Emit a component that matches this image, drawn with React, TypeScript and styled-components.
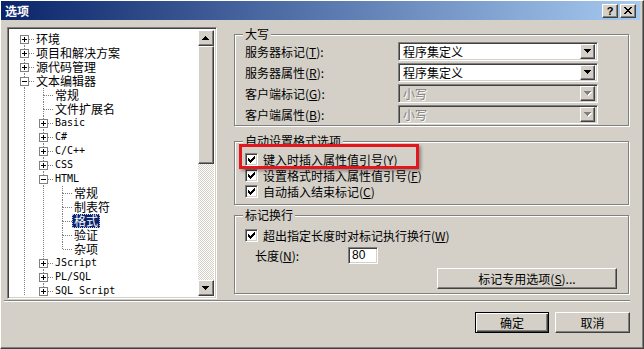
import styled, { createGlobalStyle, css } from "styled-components";

const GlobalStyle = createGlobalStyle`
  html, body { margin: 0; padding: 0; background: #d4d0c8; }
  body {
    font-family: "Noto Sans CJK SC", "Liberation Sans", sans-serif;
    font-size: 12px;
    line-height: 14px;
    color: #000;
  }
  * { box-sizing: border-box; }
`;

const raised = css`
  border: 1px solid;
  border-color: #fff #404040 #404040 #fff;
  box-shadow: inset -1px -1px 0 #808080, inset 1px 1px 0 #d4d0c8;
  background: #d4d0c8;
`;

const sunken = css`
  border: 1px solid;
  border-color: #808080 #fff #fff #808080;
  box-shadow: inset 1px 1px 0 #404040, inset -1px -1px 0 #d4d0c8;
`;

const Window = styled.div`
  position: relative;
  width: 644px;
  height: 349px;
  background: #d4d0c8;
  border-left: 1px solid #fff;
  border-top: 1px solid #fff;
  border-right: 1px solid #404040;
  border-bottom: 1px solid #404040;
  box-shadow: inset -1px -1px 0 #808080;
  padding: 0 3px 2px 0;
  display: flex;
  flex-direction: column;
`;

const TitleBar = styled.div`
  height: 19px;
  display: flex;
  align-items: center;
  padding: 0 4px 0 4px;
  background: linear-gradient(to right, #0a246a, #a6caf0);
  color: #fff;
  font-weight: bold;
`;

const Title = styled.div`
  flex: 1;
`;

const CaptionButton = styled.div`
  ${raised};
  width: 16px;
  height: 14px;
  margin-left: 2px;
  display: flex;
  align-items: center;
  justify-content: center;
  color: #000;
  font-family: "Liberation Sans", sans-serif;
  font-size: 11px;
  font-weight: bold;
  line-height: 12px;
`;

const Body = styled.div`
  height: 280px;
  display: flex;
  padding: 7px 0 0 6px;
`;

const TreeBox = styled.div`
  ${sunken};
  background: #fff;
  width: 210px;
  height: 272px;
  padding: 2px;
  display: flex;
`;

const TreeList = styled.div`
  flex: 1;
  overflow: hidden;
  padding: 2px 0 0 5px;
`;

const TreeRow = styled.div`
  height: 14px;
  display: flex;
  align-items: center;
  white-space: nowrap;
`;

const TreeLabel = styled.span<{ $selected?: boolean; $mono?: boolean }>`
  padding: 0 2px;
  height: 14px;
  line-height: 14px;
  ${(p) =>
    p.$mono &&
    css`
      font-family: "DejaVu Sans Mono", "Liberation Mono", monospace;
      font-size: 10px;
    `}
  ${(p) =>
    p.$selected &&
    css`
      background: #0a246a;
      color: #fff;
      outline: 1px dotted #c8c8ff;
      outline-offset: -1px;
    `}
`;

const ScrollBar = styled.div`
  width: 16px;
  display: flex;
  flex-direction: column;
`;

const ScrollButton = styled.div`
  ${raised};
  width: 16px;
  height: 16px;
  display: flex;
  align-items: center;
  justify-content: center;
`;

const Thumb = styled.div`
  ${raised};
  height: 118px;
`;

const Track = styled.div`
  flex: 1;
  background: repeating-conic-gradient(#fff 0 25%, #d4d0c8 0 50%) 0 0 / 2px 2px;
`;

const RightPane = styled.div`
  width: 395px;
  margin-left: 17px;
  display: flex;
  flex-direction: column;
`;

const Group = styled.fieldset<{ $h: number; $mt: number }>`
  margin: ${(p) => p.$mt}px 0 0 0;
  padding: 0;
  height: ${(p) => p.$h}px;
  min-inline-size: 0;
  border: 1px solid #808080;
  box-shadow: inset 1px 1px 0 #fff, 1px 1px 0 #fff;
`;

const Legend = styled.legend`
  margin-left: 8px;
  padding: 0 2px;
  line-height: 14px;
  background: #d4d0c8;
  position: relative;
`;

const GroupBody = styled.div<{ $pt: number }>`
  padding: ${(p) => p.$pt}px 0 0 10px;
  display: flex;
  flex-direction: column;
`;

const FieldRow = styled.div`
  height: 19px;
  margin-bottom: 2px;
  display: flex;
  align-items: center;
`;

const FieldLabel = styled.div<{ $w: number; $pl?: number }>`
  width: ${(p) => p.$w}px;
  padding-left: ${(p) => p.$pl ?? 0}px;
  color: #000;
`;

const Combo = styled.div<{ $disabled?: boolean }>`
  ${sunken};
  width: 200px;
  height: 19px;
  padding: 2px;
  display: flex;
  align-items: center;
  background: ${(p) => (p.$disabled ? "#d4d0c8" : "#fff")};
  color: ${(p) => (p.$disabled ? "#808080" : "#000")};
  text-shadow: ${(p) => (p.$disabled ? "1px 1px 0 #fff" : "none")};
`;

const ComboText = styled.div`
  flex: 1;
  padding-left: 2px;
`;

const DropButton = styled.div`
  ${raised};
  width: 15px;
  height: 15px;
  display: flex;
  align-items: center;
  justify-content: center;
`;

const CheckRow = styled.div`
  height: 16px;
  display: flex;
  align-items: flex-start;
`;

const CheckBox = styled.div`
  ${sunken};
  background: #fff;
  width: 13px;
  height: 13px;
  margin-top: 1px;
  display: flex;
  align-items: center;
  justify-content: center;
`;

const CheckLabel = styled.span`
  margin-left: 5px;
  line-height: 15px;
`;

const LengthRow = styled.div`
  margin-top: 3px;
  height: 17px;
  display: flex;
  align-items: center;
`;

const TextInput = styled.div`
  ${sunken};
  background: #fff;
  width: 30px;
  height: 17px;
  padding: 1px 3px;
  font-family: "Liberation Sans", sans-serif;
  font-size: 12px;
  line-height: 13px;
`;

const ButtonRow = styled.div`
  margin-top: 4px;
  display: flex;
  justify-content: flex-end;
  padding-right: 11px;
`;

const PushButton = styled.div<{ $w: number; $default?: boolean }>`
  ${raised};
  width: ${(p) => p.$w}px;
  height: 21px;
  display: flex;
  align-items: center;
  justify-content: center;
  ${(p) =>
    p.$default &&
    css`
      border: 1px solid #000;
      box-shadow: inset 1px 1px 0 #fff, inset -1px -1px 0 #404040, inset -2px -2px 0 #808080;
    `}
`;

const Separator = styled.div`
  height: 2px;
  margin: 0 10px 0 3px;
  border-top: 1px solid #808080;
  border-bottom: 1px solid #fff;
`;

const Footer = styled.div`
  display: flex;
  justify-content: flex-end;
  gap: 6px;
  padding: 10px 10px 0 0;
`;

const Highlight = styled.div`
  position: absolute;
  left: 238px;
  top: 143px;
  width: 180px;
  height: 25px;
  border: 3px solid #e3161d;
  box-shadow: 2px 2px 3px rgba(0, 0, 0, 0.35);
  pointer-events: none;
`;

function Arrow({ up, disabled }: { up?: boolean; disabled?: boolean }) {
  const d = up
    ? "M3 0h1v1h1v1h1v1h1v1h-7v-1h1v-1h1v-1h1z"
    : "M0 0h7v1h-1v1h-1v1h-1v1h-1v-1h-1v-1h-1v-1h-1z";
  return (
    <svg width="8" height="5" viewBox="0 0 8 5" shapeRendering="crispEdges">
      {disabled && <path d={d} fill="#fff" transform="translate(1 1)" />}
      <path d={d} fill={disabled ? "#808080" : "#000"} />
    </svg>
  );
}

function Check() {
  const cols = [2, 3, 4, 3, 2, 1, 0];
  return (
    <svg width="7" height="7" viewBox="0 0 7 7" shapeRendering="crispEdges">
      <path d={cols.map((y, x) => `M${x} ${y}h1v3h-1z`).join("")} fill="#000" />
    </svg>
  );
}

function CloseGlyph() {
  return (
    <svg width="8" height="7" viewBox="0 0 8 7" shapeRendering="crispEdges">
      <path
        d="M0 0h2v1h1v1h2v-1h1v-1h2v1h-1v1h-1v1h-1v1h1v1h1v1h1v1h-2v-1h-1v-1h-2v1h-1v1h-2v-1h1v-1h1v-1h1v-1h-1v-1h-1v-1h-1z"
        fill="#000"
      />
    </svg>
  );
}

type Node = {
  label: string;
  level: number;
  exp?: "+" | "-";
  last?: boolean;
  selected?: boolean;
};

const tree: Node[] = [
  { label: "环境", level: 0, exp: "+" },
  { label: "项目和解决方案", level: 0, exp: "+" },
  { label: "源代码管理", level: 0, exp: "+" },
  { label: "文本编辑器", level: 0, exp: "-" },
  { label: "常规", level: 1 },
  { label: "文件扩展名", level: 1 },
  { label: "Basic", level: 1, exp: "+" },
  { label: "C#", level: 1, exp: "+" },
  { label: "C/C++", level: 1, exp: "+" },
  { label: "CSS", level: 1, exp: "+" },
  { label: "HTML", level: 1, exp: "-" },
  { label: "常规", level: 2 },
  { label: "制表符", level: 2 },
  { label: "格式", level: 2, selected: true },
  { label: "验证", level: 2 },
  { label: "杂项", level: 2, last: true },
  { label: "JScript", level: 1, exp: "+" },
  { label: "PL/SQL", level: 1, exp: "+" },
  { label: "SQL Script", level: 1, exp: "+" },
  { label: "T-SQL", level: 1, exp: "+" },
];

// one 19x14 cell of the tree connector lines
function TreeCell({ kind, top, bottom, exp }: { kind: "line" | "elbow"; top?: boolean; bottom?: boolean; exp?: "+" | "-" }) {
  const dash = { stroke: "#808080", strokeDasharray: "1 1", strokeWidth: 1 };
  return (
    <svg width="19" height="14" viewBox="0 0 19 14" shapeRendering="crispEdges" style={{ flex: "none" }}>
      {kind === "line" && <line x1="9.5" y1="0" x2="9.5" y2="14" {...dash} />}
      {kind === "elbow" && (
        <>
          {top && <line x1="9.5" y1="0" x2="9.5" y2="7" {...dash} />}
          {bottom && <line x1="9.5" y1="7" x2="9.5" y2="14" {...dash} />}
          <line x1="10" y1="7.5" x2="19" y2="7.5" {...dash} />
          {exp && (
            <>
              <rect x="5.5" y="3.5" width="8" height="8" fill="#fff" stroke="#808080" />
              <line x1="7" y1="7.5" x2="12" y2="7.5" stroke="#000" />
              {exp === "+" && <line x1="9.5" y1="5" x2="9.5" y2="10" stroke="#000" />}
            </>
          )}
        </>
      )}
    </svg>
  );
}

const combos = [
  { label: "服务器标记", key: "T", value: "程序集定义" },
  { label: "服务器属性", key: "R", value: "程序集定义" },
  { label: "客户端标记", key: "G", value: "小写", disabled: true },
  { label: "客户端属性", key: "B", value: "小写", disabled: true },
];

const checks = [
  { label: "键入时插入属性值引号", key: "Y" },
  { label: "设置格式时插入属性值引号", key: "F" },
  { label: "自动插入结束标记", key: "C" },
];

export default function App() {
  return (
    <>
      <GlobalStyle />
      <Window>
        <TitleBar>
          <Title>选项</Title>
          <CaptionButton>?</CaptionButton>
          <CaptionButton>
            <CloseGlyph />
          </CaptionButton>
        </TitleBar>
        <Body>
          <TreeBox>
            <TreeList>
              {tree.map((n, i) => (
                <TreeRow key={i}>
                  {Array.from({ length: n.level }).map((_, k) => (
                    <TreeCell key={k} kind="line" />
                  ))}
                  <TreeCell kind="elbow" top={i > 0} bottom={!n.last} exp={n.exp} />
                  <TreeLabel $selected={n.selected} $mono={/^[\x20-\x7e]+$/.test(n.label)}>
                    {n.label}
                  </TreeLabel>
                </TreeRow>
              ))}
            </TreeList>
            <ScrollBar>
              <ScrollButton>
                <Arrow up />
              </ScrollButton>
              <Thumb />
              <Track />
              <ScrollButton>
                <Arrow />
              </ScrollButton>
            </ScrollBar>
          </TreeBox>

          <RightPane>
            <Group $h={99} $mt={0}>
              <Legend>大写</Legend>
              <GroupBody $pt={1}>
                {combos.map((c) => (
                  <FieldRow key={c.key}>
                    <FieldLabel $w={153}>
                      {c.label}(<u>{c.key}</u>):
                    </FieldLabel>
                    <Combo $disabled={c.disabled}>
                      <ComboText>{c.value}</ComboText>
                      <DropButton>
                        <Arrow disabled={c.disabled} />
                      </DropButton>
                    </Combo>
                  </FieldRow>
                ))}
              </GroupBody>
            </Group>

            <Group $h={71} $mt={8}>
              <Legend>自动设置格式选项</Legend>
              <GroupBody $pt={4}>
                {checks.map((c) => (
                  <CheckRow key={c.key}>
                    <CheckBox>
                      <Check />
                    </CheckBox>
                    <CheckLabel>
                      {c.label}(<u>{c.key}</u>)
                    </CheckLabel>
                  </CheckRow>
                ))}
              </GroupBody>
            </Group>

            <Group $h={86} $mt={3}>
              <Legend>标记换行</Legend>
              <GroupBody $pt={6}>
                <CheckRow>
                  <CheckBox>
                    <Check />
                  </CheckBox>
                  <CheckLabel>
                    超出指定长度时对标记执行换行(<u>W</u>)
                  </CheckLabel>
                </CheckRow>
                <LengthRow>
                  <FieldLabel $w={103} $pl={10}>
                    长度(<u>N</u>):
                  </FieldLabel>
                  <TextInput>80</TextInput>
                </LengthRow>
                <ButtonRow>
                  <PushButton $w={180}>
                    标记专用选项(<u>S</u>)...
                  </PushButton>
                </ButtonRow>
              </GroupBody>
            </Group>
          </RightPane>
        </Body>
        <Separator />
        <Footer>
          <PushButton $w={74} $default>
            确定
          </PushButton>
          <PushButton $w={75}>取消</PushButton>
        </Footer>
        <Highlight />
      </Window>
    </>
  );
}
